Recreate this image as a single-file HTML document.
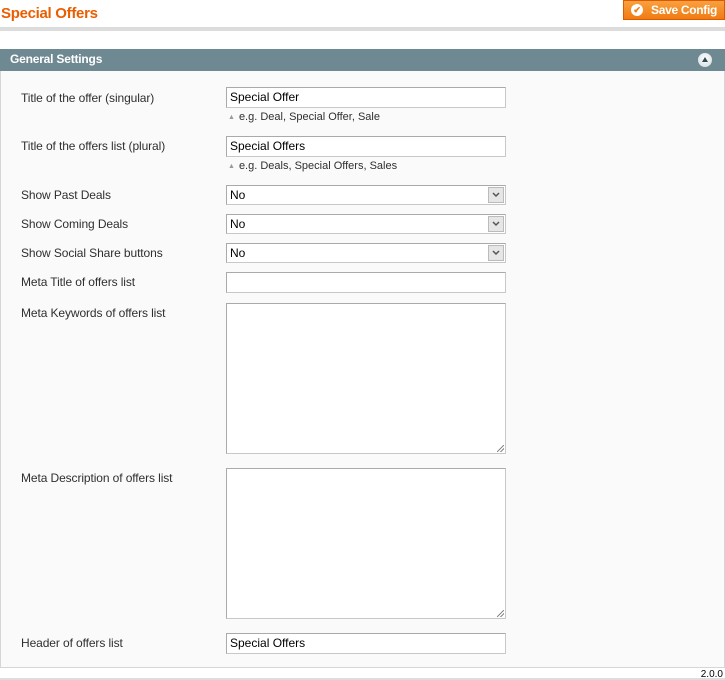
<!DOCTYPE html>
<html><head><style>
*{box-sizing:border-box;margin:0;padding:0}
body{width:725px;height:680px;background:#fff;font-family:"Liberation Sans",Arial,sans-serif;font-size:12px;color:#2f2f2f;position:relative;overflow:hidden}
.abs{position:absolute}
h1{position:absolute;left:1px;top:5px;font-size:15px;font-weight:bold;color:#eb5e00;letter-spacing:-0.3px}
.btn{position:absolute;left:623px;top:0;width:102px;height:20px;background:linear-gradient(#f9a040,#f07c12);border:1px solid #de5800;color:#fff;font-weight:bold;font-size:12px;line-height:18px;padding-left:27px;letter-spacing:-0.3px}
.btn i{position:absolute;left:7px;top:3px;width:12px;height:12px;border-radius:50%;background:#fff;color:#f07c12;font-size:9px;line-height:12px;text-align:center;font-style:normal}
.line{left:0;top:27px;width:725px;height:4px;background:#dcdcdc}
.sec{left:0;top:49px;width:725px;height:22px;background:#6f8992;color:#fff;font-weight:bold;font-size:12px;line-height:21px;padding-left:10px;letter-spacing:-0.2px}
.tog{position:absolute;left:698px;top:4px;width:14px;height:14px;border-radius:50%;background:radial-gradient(circle at 50% 40%,#fff,#cfd8db);}
.tog:after{content:"";position:absolute;left:4px;top:4px;border-left:3px solid transparent;border-right:3px solid transparent;border-bottom:5px solid #2f4a54}
.panel{left:0;top:71px;width:725px;height:597px;background:#fafafa;border:1px solid #d6d6d6;border-top:none}
.lbl{position:absolute;left:21px;font-size:12px;color:#2f2f2f;letter-spacing:-0.1px}
.inp{position:absolute;left:226px;width:280px;height:21px;background:#fff;border:1px solid #aaa;border-color:#aaa #c8c8c8 #c8c8c8 #aaa;padding:2px 3px;font-size:12px;color:#000}
.sel .arr{position:absolute;right:1px;top:1px;width:16px;height:16px;background:#e6e6e6;border:1px solid #bbb}
.sel .arr svg{position:absolute;left:3px;top:4px}
.hint{position:absolute;left:228px;font-size:11px;color:#2f2f2f}
.hint:before{content:"▲";font-size:7px;color:#999;margin-right:4px;vertical-align:1px}
.ta{height:151px}
.ta:after{content:"";position:absolute;right:1px;bottom:1px;width:7px;height:7px;background:linear-gradient(135deg,transparent 45%,#888 45%,#888 55%,transparent 55%,transparent 70%,#888 70%,#888 80%,transparent 80%)}
.ver{right:2px;top:669px;font-size:10px;color:#000}
.bl{left:0;top:678px;width:725px;height:2px;background:#ddd}
</style></head><body>
<h1>Special Offers</h1>
<div class="btn"><i>✔</i>Save Config</div>
<div class="abs line"></div>
<div class="abs sec">General Settings<span class="tog"></span></div>
<div class="abs panel"></div>
<div class="lbl" style="top:91px">Title of the offer (singular)</div>
<div class="inp" style="top:87px">Special Offer</div>
<div class="hint" style="top:111px">e.g. Deal, Special Offer, Sale</div>
<div class="lbl" style="top:139px">Title of the offers list (plural)</div>
<div class="inp" style="top:136px">Special Offers</div>
<div class="hint" style="top:160px">e.g. Deals, Special Offers, Sales</div>
<div class="lbl" style="top:188px">Show Past Deals</div>
<div class="inp sel" style="top:185px;height:20px">No<span class="arr"><svg width="8" height="6"><path d="M1 1L4 4L7 1" stroke="#555" stroke-width="1.5" fill="none"/></svg></span></div>
<div class="lbl" style="top:217px">Show Coming Deals</div>
<div class="inp sel" style="top:214px;height:20px">No<span class="arr"><svg width="8" height="6"><path d="M1 1L4 4L7 1" stroke="#555" stroke-width="1.5" fill="none"/></svg></span></div>
<div class="lbl" style="top:246px">Show Social Share buttons</div>
<div class="inp sel" style="top:243px;height:20px">No<span class="arr"><svg width="8" height="6"><path d="M1 1L4 4L7 1" stroke="#555" stroke-width="1.5" fill="none"/></svg></span></div>
<div class="lbl" style="top:275px">Meta Title of offers list</div>
<div class="inp" style="top:272px"></div>
<div class="lbl" style="top:306px">Meta Keywords of offers list</div>
<div class="inp ta" style="top:303px"></div>
<div class="lbl" style="top:471px">Meta Description of offers list</div>
<div class="inp ta" style="top:468px"></div>
<div class="lbl" style="top:636px">Header of offers list</div>
<div class="inp" style="top:633px">Special Offers</div>
<div class="abs ver">2.0.0</div>
<div class="abs bl"></div>
</body></html>
